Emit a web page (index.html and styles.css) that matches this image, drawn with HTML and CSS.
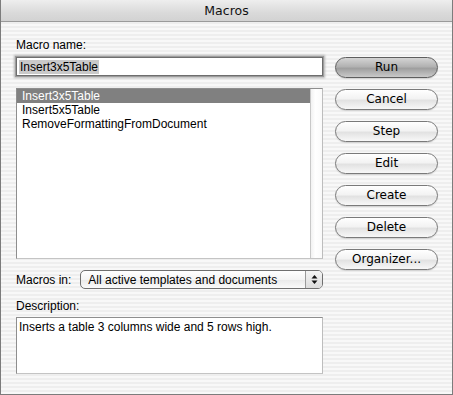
FILE: index.html
```html
<!DOCTYPE html>
<html lang="en">
<head>
  <meta charset="UTF-8">
  <title>Macros</title>
  <link rel="stylesheet" href="styles.css">
</head>
<body>
<div class="window">
  <div class="titlebar">Macros</div>

  <div class="content">
    <!-- left column: name, list, scope, description -->
    <div class="main-col">
      <div class="label">Macro name:</div>
      <div class="name-field"><span class="sel-text">Insert3x5Table</span></div>

      <div class="macro-list">
        <div class="list-rows">
          <div class="list-row selected">Insert3x5Table</div>
          <div class="list-row">Insert5x5Table</div>
          <div class="list-row">RemoveFormattingFromDocument</div>
        </div>
        <div class="scroll-track"></div>
      </div>

      <div class="scope-row">
        <span class="label">Macros in:</span>
        <div class="popup">
          <span class="popup-text">All active templates and documents</span>
          <span class="popup-arrows">
            <svg width="7" height="11" viewBox="0 0 7 11">
              <path d="M3.5 1 L6.5 4.5 L0.5 4.5 Z" fill="#111"/>
              <path d="M0.5 6.5 L6.5 6.5 L3.5 10 Z" fill="#111"/>
            </svg>
          </span>
        </div>
      </div>

      <div class="label desc-label">Description:</div>
      <div class="desc-box">Inserts a table 3 columns wide and 5 rows high.</div>
    </div>

    <!-- right column: buttons -->
    <div class="button-col">
      <button class="aqua-button default">Run</button>
      <button class="aqua-button">Cancel</button>
      <button class="aqua-button">Step</button>
      <button class="aqua-button">Edit</button>
      <button class="aqua-button">Create</button>
      <button class="aqua-button">Delete</button>
      <button class="aqua-button">Organizer...</button>
    </div>
  </div>
</div>
</body>
</html>
```

FILE: styles.css
```css
body {
  margin: 0;
  padding: 0;
  font-family: "Liberation Sans", Arial, sans-serif;
  font-size: 12px;
  color: #000;
}
.window {
  width: 453px;
  height: 395px;
  box-sizing: border-box;
  border: 1px solid #7c7c7c;
  border-top: none;
  background: repeating-linear-gradient(#f8f8f8 0px, #f8f8f8 2px, #eeeeee 2px, #eeeeee 4px);
}
.titlebar {
  height: 21px;
  line-height: 22px;
  border-bottom: 1px solid #9a9a9a;
  background: linear-gradient(#eeeeee, #dadada 60%, #d2d2d2);
  text-align: center;
  font-family: "DejaVu Sans", sans-serif;
  font-size: 12.5px;
  color: #111;
}
.content {
  display: flex;
  padding-left: 15px;
}
.main-col {
  width: 307px;
  display: flex;
  flex-direction: column;
}
.label {
  line-height: 14px;
  white-space: nowrap;
}
.main-col > .label:first-child {
  margin-top: 16px;
}
.name-field {
  margin-top: 5px;
  height: 19px;
  box-sizing: border-box;
  border: 1px solid #6e6e6e;
  background: #fff;
  padding: 2px 0 0 2px;
  line-height: 14px;
  box-shadow: 0 0 0 1px #9c9c9c, 0 0 2px 2px #b4b4b4;
}
.sel-text {
  background: #c9c9c9;
  padding: 0 1px;
}
.macro-list {
  margin-top: 12px;
  height: 171px;
  box-sizing: border-box;
  border: 1px solid #8e8e8e;
  border-right-color: #bdbdbd;
  border-bottom-color: #c4c4c4;
  background: #fff;
  display: flex;
}
.list-rows {
  flex: 1;
}
.list-row {
  height: 14px;
  line-height: 14px;
  padding-left: 5px;
}
.list-row.selected {
  background: #808080;
  color: #fff;
}
.scroll-track {
  width: 11px;
  border-left: 1px solid #c8c8c8;
  background: linear-gradient(90deg, #f2f2f2, #fff 40%, #fafafa);
}
.scope-row {
  margin-top: 11px;
  display: flex;
  align-items: center;
  gap: 9px;
}
.popup {
  flex: 1;
  height: 19px;
  box-sizing: border-box;
  border: 1px solid #6f6f6f;
  border-radius: 5px;
  background: linear-gradient(#ffffff, #f4f4f4 50%, #e9e9e9 51%, #fafafa);
  display: flex;
  align-items: center;
}
.popup-text {
  flex: 1;
  padding-left: 7px;
  line-height: 14px;
}
.popup-arrows {
  width: 16px;
  height: 100%;
  border-left: 1px solid #9a9a9a;
  border-radius: 0 4px 4px 0;
  background: linear-gradient(#f4f4f4, #dcdcdc);
  display: flex;
  align-items: center;
  justify-content: center;
}
.desc-label {
  margin-top: 10px;
}
.desc-box {
  margin-top: 4px;
  height: 57px;
  box-sizing: border-box;
  border: 1px solid #8e8e8e;
  border-right-color: #bdbdbd;
  border-bottom-color: #c4c4c4;
  background: #fff;
  padding: 2px 0 0 2px;
  line-height: 14px;
}
.button-col {
  margin-left: 12px;
  padding-top: 35px;
  display: flex;
  flex-direction: column;
  gap: 11px;
}
.aqua-button {
  width: 103px;
  height: 21px;
  padding: 0;
  border: 1px solid #7a7a7a;
  border-radius: 11px;
  background: linear-gradient(#ffffff, #f3f3f3 45%, #e2e2e2 55%, #f8f8f8);
  box-shadow: 0 1px 1px rgba(0, 0, 0, 0.12);
  font-family: "DejaVu Sans", sans-serif;
  font-size: 12px;
  line-height: 19px;
  color: #000;
}
.aqua-button.default {
  border-color: #5e5e5e;
  background: linear-gradient(#d4d4d4, #b2b2b2 45%, #9f9f9f 55%, #c9c9c9);
}
```
